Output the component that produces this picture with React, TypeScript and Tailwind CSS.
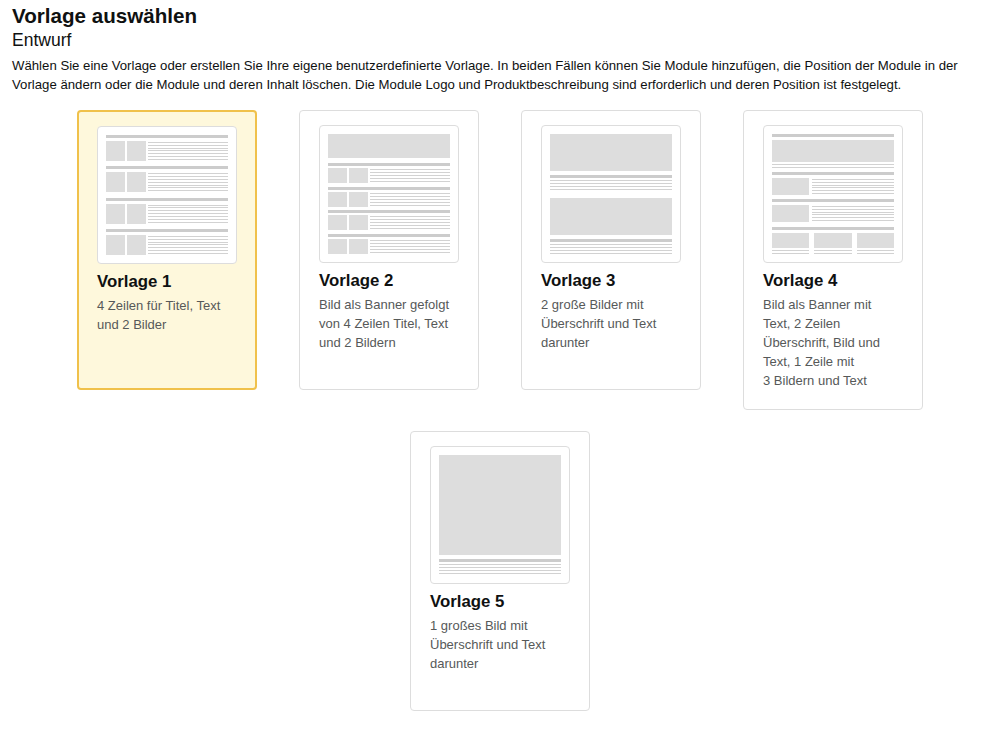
import type { ReactNode } from "react";

const FONT = "font-['Liberation_Sans',Arial,sans-serif]";

function Bar() {
  return <div className="h-[3px] shrink-0 bg-[#cccccc]" />;
}

function Img({ className = "" }: { className?: string }) {
  return <div className={`shrink-0 bg-[#dddddd] ${className}`} />;
}

function Lines({ n, className = "" }: { n: number; className?: string }) {
  return (
    <div className={`flex flex-col gap-[2px] ${className}`}>
      {Array.from({ length: n }).map((_, i) => (
        <div key={i} className="h-px bg-[#d2d2d2]" />
      ))}
    </div>
  );
}

function RowLines({ n }: { n: number }) {
  return (
    <div className="flex flex-1 flex-col justify-between py-px">
      {Array.from({ length: n }).map((_, i) => (
        <div key={i} className="h-px bg-[#d2d2d2]" />
      ))}
    </div>
  );
}

function Thumb1() {
  return (
    <div className="flex h-full flex-col justify-between">
      {[0, 1, 2, 3].map((i) => (
        <div key={i} className="flex flex-col">
          <Bar />
          <div className="mt-[3px] flex h-[20px] gap-[2px]">
            <Img className="w-[19px]" />
            <Img className="w-[19px]" />
            <RowLines n={7} />
          </div>
        </div>
      ))}
    </div>
  );
}

function Thumb2() {
  return (
    <div className="flex h-full flex-col">
      <Img className="h-[24px]" />
      <div className="mt-[5px] flex flex-1 flex-col justify-between">
        {[0, 1, 2, 3].map((i) => (
          <div key={i} className="flex flex-col">
            <Bar />
            <div className="mt-[2px] flex h-[15px] gap-[2px]">
              <Img className="w-[19px]" />
              <Img className="w-[19px]" />
              <RowLines n={5} />
            </div>
          </div>
        ))}
      </div>
    </div>
  );
}

function Thumb3() {
  return (
    <div className="flex h-full flex-col">
      <Img className="h-[37px]" />
      <div className="mt-[4px]">
        <Bar />
      </div>
      <Lines n={4} className="mt-[2px]" />
      <Img className="mt-[8px] h-[37px]" />
      <div className="mt-[4px]">
        <Bar />
      </div>
      <Lines n={4} className="mt-[2px]" />
    </div>
  );
}

function Thumb4() {
  return (
    <div className="flex h-full flex-col">
      <Bar />
      <Img className="mt-[3px] h-[22px]" />
      <Lines n={2} className="mt-[2px]" />
      <div className="mt-[4px]">
        <Bar />
      </div>
      <div className="mt-[3px] flex h-[17px] gap-[3px]">
        <Img className="w-[37px]" />
        <RowLines n={6} />
      </div>
      <div className="mt-[4px]">
        <Bar />
      </div>
      <div className="mt-[3px] flex h-[17px] gap-[3px]">
        <Img className="w-[37px]" />
        <RowLines n={6} />
      </div>
      <div className="mt-[5px]">
        <Bar />
      </div>
      <div className="mt-[3px] flex gap-[5px]">
        {[0, 1, 2].map((i) => (
          <div key={i} className="flex flex-1 flex-col">
            <Img className="h-[15px]" />
            <Lines n={2} className="mt-[2px]" />
          </div>
        ))}
      </div>
    </div>
  );
}

function Thumb5() {
  return (
    <div className="flex h-full flex-col">
      <Img className="h-[100px]" />
      <div className="mt-[4px]">
        <Bar />
      </div>
      <Lines n={4} className="mt-[2px]" />
    </div>
  );
}

type Template = {
  title: string;
  lines: string[];
  thumb: ReactNode;
};

const TEMPLATES: Template[] = [
  { title: "Vorlage 1", lines: ["4 Zeilen für Titel, Text", "und 2 Bilder"], thumb: <Thumb1 /> },
  {
    title: "Vorlage 2",
    lines: ["Bild als Banner gefolgt", "von 4 Zeilen Titel, Text", "und 2 Bildern"],
    thumb: <Thumb2 />,
  },
  {
    title: "Vorlage 3",
    lines: ["2 große Bilder mit", "Überschrift und Text", "darunter"],
    thumb: <Thumb3 />,
  },
  {
    title: "Vorlage 4",
    lines: ["Bild als Banner mit", "Text, 2 Zeilen", "Überschrift, Bild und", "Text, 1 Zeile mit", "3 Bildern und Text"],
    thumb: <Thumb4 />,
  },
  {
    title: "Vorlage 5",
    lines: ["1 großes Bild mit", "Überschrift und Text", "darunter"],
    thumb: <Thumb5 />,
  },
];

function Card({ t, selected }: { t: Template; selected: boolean }) {
  return (
    <div
      className={`min-h-[280px] w-[180px] rounded-[4px] ${
        selected
          ? "border-2 border-[#f0c14b] bg-[#fef8dc] px-[18px] pb-[18px] pt-[14px]"
          : "border border-[#dddddd] bg-white px-[19px] pb-[19px] pt-[14px]"
      }`}
    >
      <div className="h-[138px] w-[140px] rounded-[4px] border border-[#dddddd] bg-white p-[8px]">{t.thumb}</div>
      <h3 className="mt-[7px] text-[16.8px] font-bold leading-[22px] text-[#0f1111]">{t.title}</h3>
      <p className="mt-[3px] text-[13px] leading-[19px] text-[#565959]">
        {t.lines.map((l, i) => (
          <span key={i} className="block">
            {l}
          </span>
        ))}
      </p>
    </div>
  );
}

export default function App() {
  return (
    <div className={`${FONT} min-h-screen bg-white px-3 pt-[4px] text-[#0f1111]`}>
      <h1 className="text-[20.6px] font-bold leading-[24px]">Vorlage auswählen</h1>
      <h2 className="text-[17.5px] leading-[24px]">Entwurf</h2>
      <p className="mt-[4px] text-[13.2px] leading-[19px]">
        Wählen Sie eine Vorlage oder erstellen Sie Ihre eigene benutzerdefinierte Vorlage. In beiden Fällen können Sie
        Module hinzufügen, die Position der Module in der Vorlage ändern oder die Module und deren Inhalt löschen. Die
        Module Logo und Produktbeschreibung sind erforderlich und deren Position ist festgelegt.
      </p>
      <div className="ml-[65px] mt-[16px] flex w-[846px] flex-wrap items-start justify-center gap-x-[42px] gap-y-[21px]">
        {TEMPLATES.map((t, i) => (
          <Card key={t.title} t={t} selected={i === 0} />
        ))}
      </div>
    </div>
  );
}
